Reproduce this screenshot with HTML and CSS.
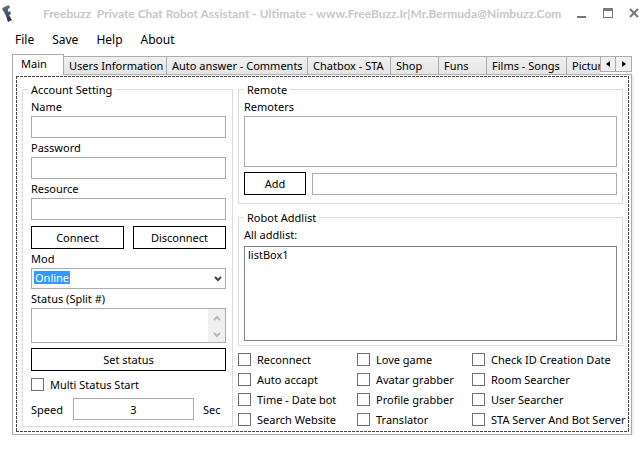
FILE: index.html
```html
<!DOCTYPE html>
<html lang="en">
<head>
<meta charset="utf-8">
<title>Freebuzz</title>
<link rel="stylesheet" href="styles.css">
</head>
<body>
<header class="titlebar">
  <svg class="logo" width="13" height="18" viewBox="0 0 13 18" aria-hidden="true">
    <defs><linearGradient id="ink" x1="0" y1="0" x2="0" y2="1"><stop offset="0" stop-color="#66788c"/><stop offset="1" stop-color="#252d4c"/></linearGradient></defs>
    <path fill="url(#ink)" d="M1 5 3 3 8 1 9 4 7 5 7 8 9 7 10 10 8 11 11 16 7 18 5 12 3 8Z"/>
  </svg>
  <h1 class="title">Freebuzz&nbsp; Private Chat Robot Assistant - Ultimate - www.FreeBuzz.Ir|Mr.Bermuda@Nimbuzz.Com</h1>
  <div class="window-buttons">
    <button type="button" aria-label="Minimize"><svg width="10" height="10" viewBox="0 0 10 10"><path d="M0 8h9v2H0z" fill="#777"/></svg></button>
    <button type="button" aria-label="Maximize"><svg width="10" height="10" viewBox="0 0 10 10"><path fill-rule="evenodd" d="M0 0h10v10H0zM1 3v6h8V3z" fill="#777"/></svg></button>
    <button type="button" aria-label="Close"><svg width="10" height="10" viewBox="0 0 10 10"><path d="M1 1l8 8M9 1l-8 8" stroke="#777" stroke-width="2"/></svg></button>
  </div>
</header>
<nav class="menu">
  <button type="button">File</button>
  <button type="button">Save</button>
  <button type="button">Help</button>
  <button type="button">About</button>
</nav>
<main class="tabs">
  <div class="tabstrip">
    <div class="tablist" role="tablist">
      <button type="button" role="tab" class="tab active" aria-selected="true">Main</button>
      <button type="button" role="tab" class="tab">Users Information</button>
      <button type="button" role="tab" class="tab">Auto answer - Comments</button>
      <button type="button" role="tab" class="tab">Chatbox - STA</button>
      <button type="button" role="tab" class="tab">Shop</button>
      <button type="button" role="tab" class="tab">Funs</button>
      <button type="button" role="tab" class="tab">Films - Songs</button>
      <button type="button" role="tab" class="tab">Pictures</button>
    </div>
    <div class="scrollers">
      <button type="button" aria-label="Scroll left"><svg width="4" height="6" viewBox="0 0 4 6"><path d="M4 0v6L0 3z"/></svg></button>
      <button type="button" aria-label="Scroll right"><svg width="4" height="6" viewBox="0 0 4 6"><path d="M0 0v6l4-3z"/></svg></button>
    </div>
  </div>
  <div class="panel" role="tabpanel">
    <div class="focus-frame">
      <fieldset class="group account">
        <legend>Account Setting</legend>
        <label for="name">Name</label>
        <input id="name" type="text">
        <label for="password">Password</label>
        <input id="password" type="password">
        <label for="resource">Resource</label>
        <input id="resource" type="text">
        <div class="button-row">
          <button type="button" class="push">Connect</button>
          <button type="button" class="push">Disconnect</button>
        </div>
        <label for="mod">Mod</label>
        <div class="combo">
          <select id="mod"><option>Online</option></select>
          <svg class="chevron" width="8" height="7" viewBox="0 0 8 7"><path d="M1 1l3 3 3-3" fill="none" stroke="#444" stroke-width="2"/></svg>
        </div>
        <label for="status">Status (Split #)</label>
        <div class="status">
          <textarea id="status"></textarea>
          <div class="scrollbar" aria-hidden="true">
            <svg width="8" height="6" viewBox="0 0 8 6"><path d="M1 5l3-3 3 3" fill="none" stroke="#b8b8b8" stroke-width="2"/></svg>
            <svg width="8" height="6" viewBox="0 0 8 6"><path d="M1 1l3 3 3-3" fill="none" stroke="#b8b8b8" stroke-width="2"/></svg>
          </div>
        </div>
        <button type="button" class="push">Set status</button>
        <label class="check"><input type="checkbox">Multi Status Start</label>
        <div class="speed">
          <label for="speed">Speed</label>
          <input id="speed" type="text" value="3">
          <span>Sec</span>
        </div>
      </fieldset>
      <div class="side">
        <fieldset class="group remote">
          <legend>Remote</legend>
          <label for="remoters">Remoters</label>
          <textarea id="remoters"></textarea>
          <div class="add-row">
            <button type="button" class="push">Add</button>
            <input type="text" aria-label="Remoter">
          </div>
        </fieldset>
        <fieldset class="group addlist">
          <legend>Robot Addlist</legend>
          <label for="addlist">All addlist:</label>
          <select id="addlist" size="5"><option>listBox1</option></select>
        </fieldset>
        <div class="checks">
          <label class="check"><input type="checkbox">Reconnect</label>
          <label class="check"><input type="checkbox">Love game</label>
          <label class="check"><input type="checkbox">Check ID Creation Date</label>
          <label class="check"><input type="checkbox">Auto accapt</label>
          <label class="check"><input type="checkbox">Avatar grabber</label>
          <label class="check"><input type="checkbox">Room Searcher</label>
          <label class="check"><input type="checkbox">Time - Date bot</label>
          <label class="check"><input type="checkbox">Profile grabber</label>
          <label class="check"><input type="checkbox">User Searcher</label>
          <label class="check"><input type="checkbox">Search Website</label>
          <label class="check"><input type="checkbox">Translator</label>
          <label class="check"><input type="checkbox">STA Server And Bot Server</label>
        </div>
      </div>
    </div>
  </div>
</main>
</body>
</html>
```
FILE: styles.css
```css
* { box-sizing: border-box; }

body {
  margin: 0;
  background: #fff;
  color: #000;
  font: 11px/15px "Noto Sans", "Open Sans", sans-serif;
}

button, input, select, textarea {
  margin: 0;
  padding: 0;
  border: 0;
  border-radius: 0;
  background: none;
  color: inherit;
  font: inherit;
}

svg { display: block; }

.titlebar {
  display: flex;
  align-items: center;
  height: 26px;
  padding: 0 5px 0 1px;
}
.logo { margin-right: 29px; }
.title {
  flex: 1;
  margin: 0;
  color: #c8c8c8;
  font-family: Lato, "Noto Sans", sans-serif;
  font-size: 12px;
  font-weight: 700;
  white-space: nowrap;
}
.window-buttons { display: flex; gap: 16px; }

.menu {
  display: flex;
  gap: 18px;
  height: 26px;
  margin-bottom: 2px;
  padding: 0 15px;
  font-size: 12px;
}

.tabs { padding: 0 12px; }
.tabstrip { display: flex; height: 20px; }
.tablist {
  position: relative;
  display: flex;
  flex: 1;
  min-width: 0;
  align-items: flex-end;
  margin-bottom: -1px;
  padding-bottom: 1px;
  overflow: hidden;
}
.tab {
  flex: none;
  height: 18px;
  padding: 0 5px;
  border: 1px solid #acacac;
  border-width: 1px 1px 0 0;
  background: linear-gradient(#f0f0f0, #e5e5e5);
  text-align: left;
  white-space: nowrap;
}
.tab:nth-child(2) { width: 103px; }
.tab:nth-child(3) { width: 141px; }
.tab:nth-child(4) { width: 83px; }
.tab:nth-child(5), .tab:nth-child(6) { width: 48px; }
.tab:nth-child(7) { width: 80px; }
/* The active tab opens into the panel. */
.tab.active {
  width: 52px;
  height: 21px;
  margin-bottom: -1px;
  padding: 0 8px 3px;
  border-width: 1px 1px 0;
  background: #fff;
}
.scrollers { display: flex; padding-top: 2px; }
.scrollers button {
  display: grid;
  place-items: center;
  width: 16px;
  height: 16px;
  border: 1px solid #acacac;
  background: #f0f0f0;
}
.scrollers button + button { border-left: 0; }

.panel {
  padding: 1px 2px 2px 3px;
  border: 1px solid #acacac;
  box-shadow: 2px 1px 0 #f0f0f0;
}

.focus-frame {
  display: grid;
  grid-template-columns: 211px minmax(0, 1fr);
  gap: 5px;
  padding: 6px 6px 5px;
  background:
    repeating-linear-gradient(90deg, #444 0 3px, transparent 3px 4px) top / 100% 1px no-repeat,
    repeating-linear-gradient(90deg, #444 0 3px, transparent 3px 4px) bottom / 100% 1px no-repeat,
    repeating-linear-gradient(#444 0 3px, transparent 3px 4px) left / 1px 100% no-repeat,
    repeating-linear-gradient(#444 0 3px, transparent 3px 4px) right / 1px 100% no-repeat;
}

.group {
  min-width: 0;
  margin: 0;
  padding: 0 5px;
  border: 1px solid #dcdcdc;
}
.group > legend { padding: 0 3px; }
.group > label:not(.check) { display: block; line-height: 19px; }
.group.account { padding: 0 6px 6px 8px; }
.account > legend { margin-left: -3px; }

input[type="text"], input[type="password"] {
  display: block;
  width: 100%;
  height: 22px;
  padding: 0 3px;
  border: 1px solid #acacac;
}
textarea {
  display: block;
  width: 100%;
  border: 1px solid #acacac;
  resize: none;
}
.push {
  display: block;
  width: 100%;
  height: 23px;
  border: 1px solid #000;
}
.button-row { display: flex; gap: 9px; margin-top: 6px; }

.combo { position: relative; }
.combo select {
  display: block;
  width: 100%;
  height: 21px;
  padding: 0 3px 2px;
  border: 1px solid #acacac;
  appearance: none;
  background: linear-gradient(#39f, #39f) 2px 2px / 36px 13px no-repeat;
  color: #fff;
}
.combo option { color: #000; }
.chevron { position: absolute; top: 8px; right: 4px; pointer-events: none; }

.status { position: relative; margin-bottom: 5px; }
.status textarea { height: 35px; }
.scrollbar {
  position: absolute;
  inset: 1px 1px 1px auto;
  display: flex;
  flex-direction: column;
  align-items: center;
  justify-content: space-between;
  width: 17px;
  padding: 6px 0 4px;
  background: #f0f0f0;
}

.check { display: flex; align-items: center; gap: 6px; height: 13px; white-space: nowrap; }
.check input {
  flex: none;
  width: 13px;
  height: 13px;
  border: 1px solid #707070;
  appearance: none;
}
.account .check { margin: 7px 0; }

.speed { display: flex; align-items: center; }
.speed label { width: 42px; }
.speed input[type="text"] { flex: 1; text-align: center; }
.speed span { width: 32px; padding-left: 9px; }

.group.remote { padding-bottom: 8px; }
.remote textarea { height: 51px; margin-bottom: 5px; }
.add-row { display: flex; align-items: flex-end; gap: 6px; }
.add-row .push { flex: none; width: 62px; }

.group.addlist { margin-top: 6px; padding-bottom: 4px; }
.addlist > label { margin-bottom: 2px; }
.addlist select {
  display: block;
  width: 100%;
  height: 95px;
  border: 1px solid #828282;
  overflow: hidden;
}
.addlist option { padding: 0 3px; min-height: 0; }

.checks {
  display: grid;
  grid-template-columns: 119px 115px minmax(0, 1fr);
  row-gap: 7px;
  margin-top: 7px;
}
```
